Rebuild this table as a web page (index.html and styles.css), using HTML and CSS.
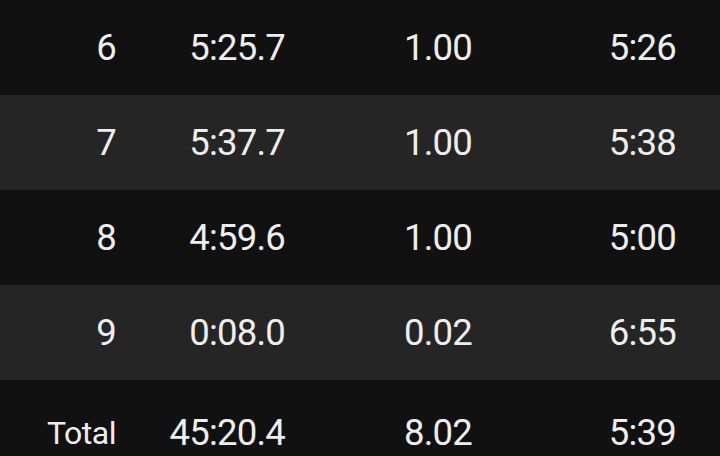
FILE: index.html
```html
<!DOCTYPE html>
<html>
<head>
<meta charset="utf-8">
<link rel="stylesheet" href="styles.css">
</head>
<body>
<div class="table">
  <div class="row dark"><span>6</span><span>5:25.7</span><span>1.00</span><span>5:26</span></div>
  <div class="row light"><span>7</span><span>5:37.7</span><span>1.00</span><span>5:38</span></div>
  <div class="row dark"><span>8</span><span>4:59.6</span><span>1.00</span><span>5:00</span></div>
  <div class="row light"><span>9</span><span>0:08.0</span><span>0.02</span><span>6:55</span></div>
  <div class="row dark total"><span class="label">Total</span><span>45:20.4</span><span>8.02</span><span>5:39</span></div>
</div>
</body>
</html>
```

FILE: styles.css
```css
html, body {
  margin: 0;
  padding: 0;
  background: #111111;
}
body {
  width: 720px;
  height: 456px;
  overflow: hidden;
  font-family: Roboto, "Noto Sans", sans-serif;
  color: #eeeeee;
}
.table {
  display: flex;
  flex-direction: column;
}
.row {
  display: grid;
  grid-template-columns: 116px 169px 187px 204px;
  box-sizing: border-box;
  height: 95px;
  padding-top: 2px;
  align-items: center;
  font-size: 36.5px;
  letter-spacing: -0.8px;
  line-height: 1;
}
.row span {
  text-align: right;
}
.dark { background: #111111; }
.light { background: #252525; }
.total {
  height: 104px;
}
.label {
  font-size: 32px;
  letter-spacing: -0.5px;
}
```
